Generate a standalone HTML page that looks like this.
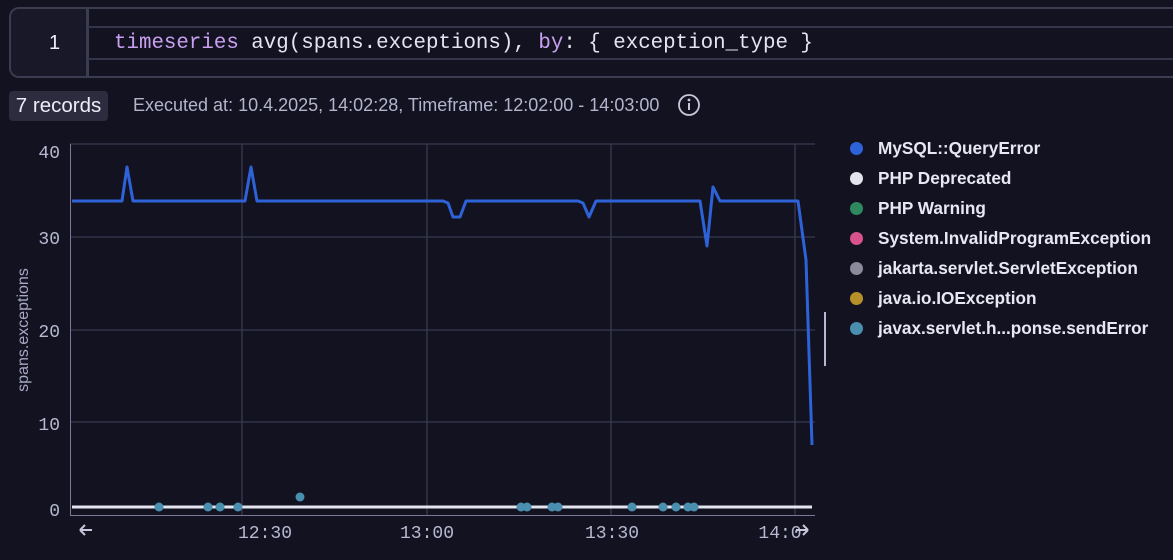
<!DOCTYPE html>
<html><head><style>
body{margin:0;width:1173px;height:560px;background:#121221;overflow:hidden;font-family:"Liberation Sans",sans-serif;position:relative}
.ed{position:absolute;left:9px;top:7px;width:1200px;height:71px;border:2.5px solid #3c3c50;border-radius:10px;box-sizing:border-box;overflow:hidden}
.gb{position:absolute;left:0;top:0;width:76px;height:100%;background:#181828}
.gut{position:absolute;left:86px;top:8px;width:2.5px;height:69px;background:#3c3c50}
.hl{position:absolute;left:88px;width:1100px;height:2px;background:#34344a}
.code{position:absolute;left:114px;top:32px;font-family:"Liberation Mono",monospace;font-size:20.8px;color:#e4e4f2;white-space:pre}
.kw{color:#c9a0f0}
.ln{position:absolute;left:49px;top:32px;font-size:20px;color:#f0f0fa}
.badge{position:absolute;left:9px;top:91px;width:99px;height:30px;background:#2c2c3e;border-radius:4px;color:#ececf8;font-size:20.5px;line-height:30px;text-align:center}
.ex{position:absolute;left:133px;top:95px;font-size:18px;color:#b4b4cc}
.leg{position:absolute;left:850px;font-size:17.2px;font-weight:bold;color:#e8e8f4}
.leg i{position:absolute;left:0;top:4px;width:13px;height:13px;border-radius:50%}
.leg span{position:absolute;left:28px;white-space:nowrap}
</style></head><body>
<div class="ed"><div class="gb"></div></div><div class="gut"></div>
<div class="hl" style="top:26px"></div><div class="hl" style="top:58px"></div>
<div class="ln">1</div>
<div class="code"><span class="kw">timeseries</span> avg(spans.exceptions), <span class="kw">by</span>: { exception_type }</div>
<div class="badge">7 records</div>
<div class="ex">Executed at: 10.4.2025, 14:02:28, Timeframe: 12:02:00 - 14:03:00</div>
<svg style="position:absolute;left:0;top:0" width="1173" height="560">
<circle cx="689" cy="105" r="10" fill="none" stroke="#c8c8dc" stroke-width="1.8"/>
<circle cx="689" cy="100" r="1.4" fill="#c8c8dc"/><rect x="688" y="103" width="2" height="7" fill="#c8c8dc"/>
<g stroke="#3a3a50" stroke-width="1.3">
<line x1="70" y1="237" x2="815" y2="237"/><line x1="70" y1="330" x2="815" y2="330"/><line x1="70" y1="422" x2="815" y2="422"/>
<line x1="242" y1="144" x2="242" y2="515"/><line x1="427" y1="144" x2="427" y2="515"/><line x1="611" y1="144" x2="611" y2="515"/><line x1="795" y1="144" x2="795" y2="515"/>
<line x1="70" y1="144" x2="815" y2="144"/>
</g>
<line x1="70.5" y1="144" x2="70.5" y2="515" stroke="#7a7a96"/>
<line x1="70" y1="515.5" x2="815" y2="515.5" stroke="#7a7a96"/>
<g font-family="Liberation Mono,monospace" font-size="18" fill="#b8b8d0" text-anchor="end">
<text x="60" y="158">40</text><text x="60" y="244">30</text><text x="60" y="337">20</text><text x="60" y="430">10</text><text x="60" y="516">0</text>
</g>
<g font-family="Liberation Mono,monospace" font-size="18" fill="#b8b8d0" text-anchor="middle">
<text x="265" y="538">12:30</text><text x="427" y="538">13:00</text><text x="612" y="538">13:30</text><text x="780" y="538">14:0</text>
</g>
<text transform="translate(28,330) rotate(-90)" font-size="16" fill="#a8a8c4" text-anchor="middle">spans.exceptions</text>
<path d="M92 530h-12M80 530l5-5M80 530l5 5" stroke="#c8c8dc" stroke-width="2" fill="none"/>
<path d="M796 530h12M808 530l-5-5M808 530l-5 5" stroke="#c8c8dc" stroke-width="2" fill="none"/>
<line x1="72" y1="507" x2="812" y2="507" stroke="#e4e4ee" stroke-width="3"/>
<g fill="#4a8fb0">
<circle cx="159" cy="507" r="4.5"/><circle cx="208" cy="507" r="4.5"/><circle cx="220" cy="507" r="4.5"/><circle cx="238" cy="507" r="4.5"/><circle cx="300" cy="497" r="4.5"/><circle cx="521" cy="507" r="4.5"/><circle cx="527" cy="507" r="4.5"/><circle cx="552" cy="507" r="4.5"/><circle cx="558" cy="507" r="4.5"/><circle cx="632" cy="507" r="4.5"/><circle cx="663" cy="507" r="4.5"/><circle cx="676" cy="507" r="4.5"/><circle cx="688" cy="507" r="4.5"/><circle cx="694" cy="507" r="4.5"/>
</g>
<polyline fill="none" stroke="#2e62d8" stroke-width="3" stroke-linejoin="round" points="72,201 122,201 127,167 133,201 245,201 251,167 257,201 443,201 448,203 453,217 460,217 466,201 578,201 583,203 589,217 596,201 700,201 707,246 713,187 720,201 798,201 806,260 812,445"/>
<rect x="824" y="312" width="2" height="54" fill="#b8b8d0"/>
</svg>
<div class="leg" style="top:138px"><i style="background:#2e62d8"></i><span>MySQL::QueryError</span></div>
<div class="leg" style="top:168px"><i style="background:#e4e4ee"></i><span>PHP Deprecated</span></div>
<div class="leg" style="top:198px"><i style="background:#2e8a5e"></i><span>PHP Warning</span></div>
<div class="leg" style="top:228px"><i style="background:#d8528e"></i><span>System.InvalidProgramException</span></div>
<div class="leg" style="top:258px"><i style="background:#8a8a9a"></i><span>jakarta.servlet.ServletException</span></div>
<div class="leg" style="top:288px"><i style="background:#b8902a"></i><span>java.io.IOException</span></div>
<div class="leg" style="top:318px"><i style="background:#4a8fb0"></i><span>javax.servlet.h...ponse.sendError</span></div>
</body></html>
